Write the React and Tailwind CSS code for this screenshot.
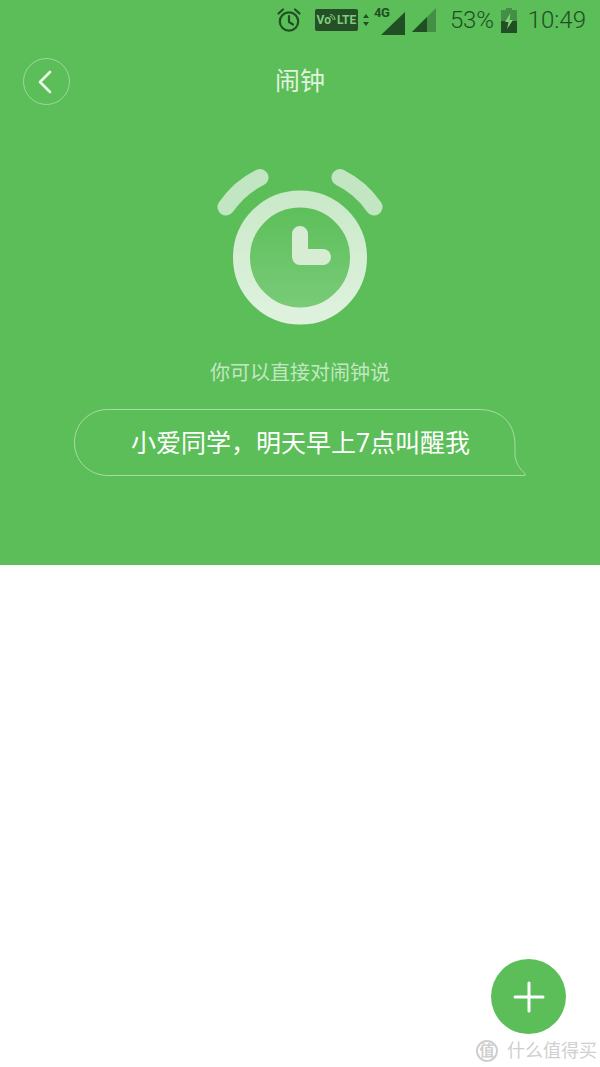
import { Plus, ChevronLeft } from 'lucide-react';

const CJK = 'font-["Roboto","Noto_Sans_CJK_SC",sans-serif]';

const AlarmIcon = () => (
  <svg width="26" height="26" viewBox="0 0 26 26" fill="none" stroke="#1f4f22" strokeWidth="2.2" strokeLinecap="round" strokeLinejoin="round">
    <circle cx="13" cy="14.5" r="9.2" />
    <path d="M13 9v6l4 2.5" />
    <path d="M2.5 6.5 7 2.5M23.500 6.500 19 2.500" />
  </svg>
);

const StatusBar = () => (
  <div className={`flex h-[40px] items-center justify-end pr-[14px] text-[24px] font-light text-[#1f4f22] ${CJK}`}>
    <AlarmIcon />
    <div className="ml-[13px] flex h-[22px] w-[43px] items-center justify-center rounded-[2px] bg-[#244f27] text-[12px] font-bold leading-none text-[#7fce7c]">
      <span>Vo</span>
      <svg className="-ml-[1px] -mt-[6px]" width="6" height="7" viewBox="0 0 6 7" fill="none" stroke="#7fce7c" strokeWidth="1">
        <path d="M0 2.500A3 3 0 0 1 3 6M0 .5A5 5 0 0 1 5 6" />
      </svg>
      <span className="ml-[1px]">LTE</span>
    </div>
    <svg className="ml-[4px]" width="8" height="14" viewBox="0 0 8 14" fill="#1f4f22">
      <path d="M4 1 7 5H1zM4 13 1 9h6z" />
    </svg>
    <div className="relative ml-[2px] h-[32px] w-[33px]">
      <span className="absolute left-[2px] top-[2px] text-[13px] font-bold leading-none tracking-[-0.5px]">4G</span>
      <svg className="absolute bottom-[1px] left-[9px]" width="24" height="23" viewBox="0 0 24 23" fill="#1f4f22">
        <path d="M24 0v23H0z" />
      </svg>
    </div>
    <svg className="ml-[7px]" width="24" height="24" viewBox="0 0 24 24">
      <path d="M24 0v24H0z" fill="#438f45" />
      <path d="M15 9v15H0z" fill="#1f4f22" />
    </svg>
    <span className="ml-[14px] tracking-[-0.2px]">53%</span>
    <svg className="ml-[7px]" width="16" height="25" viewBox="0 0 16 25">
      <path d="M5 0h6v2h5v23H0V2h5z" fill="#438f45" />
      <path d="M0 13h16v12H0z" fill="#1f4f22" />
      <path d="M9.500 5 4 14h3.500L6 21l6-9H8.500z" fill="#7fce7c" />
    </svg>
    <span className="ml-[11px]">10:49</span>
  </div>
);

const NavBar = () => (
  <div className="relative flex h-[84px] items-center justify-center pb-[2px]">
    <button className="absolute left-[23px] top-[18px] flex h-[47px] w-[47px] items-center justify-center rounded-full border border-white/40">
      <ChevronLeft size={40} strokeWidth={1.6} className="mr-[4px] text-[#eaf7e9]" />
    </button>
    <h1 className="text-[25px] font-normal leading-none text-[#e0f3df]">闹钟</h1>
  </div>
);

const ClockArt = () => (
  <svg className="mx-auto mt-[36px] block" width="180" height="172" viewBox="210 160 180 172" fill="none">
    <defs>
      <linearGradient id="face" x1="0" y1="0" x2="0" y2="1">
        <stop offset="0" stopColor="#5bbe58" />
        <stop offset="1" stopColor="#7ccc7a" />
      </linearGradient>
      <linearGradient id="ring" gradientUnits="userSpaceOnUse" x1="300" y1="190" x2="300" y2="325">
        <stop offset="0" stopColor="#c9e9c8" />
        <stop offset="1" stopColor="#e0f2df" />
      </linearGradient>
    </defs>
    <circle cx="300" cy="257.500" r="58.500" fill="url(#face)" stroke="url(#ring)" strokeWidth="17" />
    <path d="M226 207A89 89 0 0 1 260 177.500M374 207A89 89 0 0 0 340 177.500" stroke="#c2e6c1" strokeWidth="17" strokeLinecap="round" />
    <path d="M300 234V257H323" stroke="#d6edd4" strokeWidth="16" strokeLinecap="round" strokeLinejoin="round" />
  </svg>
);

const SpeechBubble = () => (
  <div className="relative mx-auto mt-[26px] flex h-[68px] w-[454px] translate-x-[1px] items-center pl-[57px]">
    <svg className="absolute inset-0" width="454" height="68" viewBox="0 0 454 68" fill="none">
      <path
        d="M34 .5H405C427 .5 441 14 441 36V44C441 54 446 60 451 64.500Q452.500 66.500 450 66.500H34C15 66.500 .5 52 .5 33.500S15 .5 34 .5Z"
        stroke="#a8dca6"
        strokeWidth="1"
      />
    </svg>
    <span className="relative text-[25px] leading-none text-white">小爱同学，明天早上7点叫醒我</span>
  </div>
);

const Watermark = () => (
  <div className="absolute bottom-[5px] right-[3px] flex items-center text-[#cfcfcf]">
    <span className="flex h-[22px] w-[22px] items-center justify-center rounded-full border-2 border-[#cfcfcf] text-[15px] font-bold leading-none">值</span>
    <span className="ml-[9px] text-[18px] leading-none">什么值得买</span>
  </div>
);

export default function App() {
  return (
    <div className={`relative h-[1067px] w-[600px] overflow-hidden bg-white ${CJK}`}>
      <div className="h-[565px] bg-[#5bbe58]">
        <StatusBar />
        <NavBar />
        <ClockArt />
        <p className="mt-[31px] text-center text-[20px] leading-none text-[#c4e7c3]">你可以直接对闹钟说</p>
        <SpeechBubble />
      </div>
      <button className="absolute bottom-[33px] right-[34px] flex h-[75px] w-[75px] items-center justify-center rounded-full bg-[#5bbe58]">
        <Plus size={48} strokeWidth={1.5} className="text-white" />
      </button>
      <Watermark />
    </div>
  );
}
